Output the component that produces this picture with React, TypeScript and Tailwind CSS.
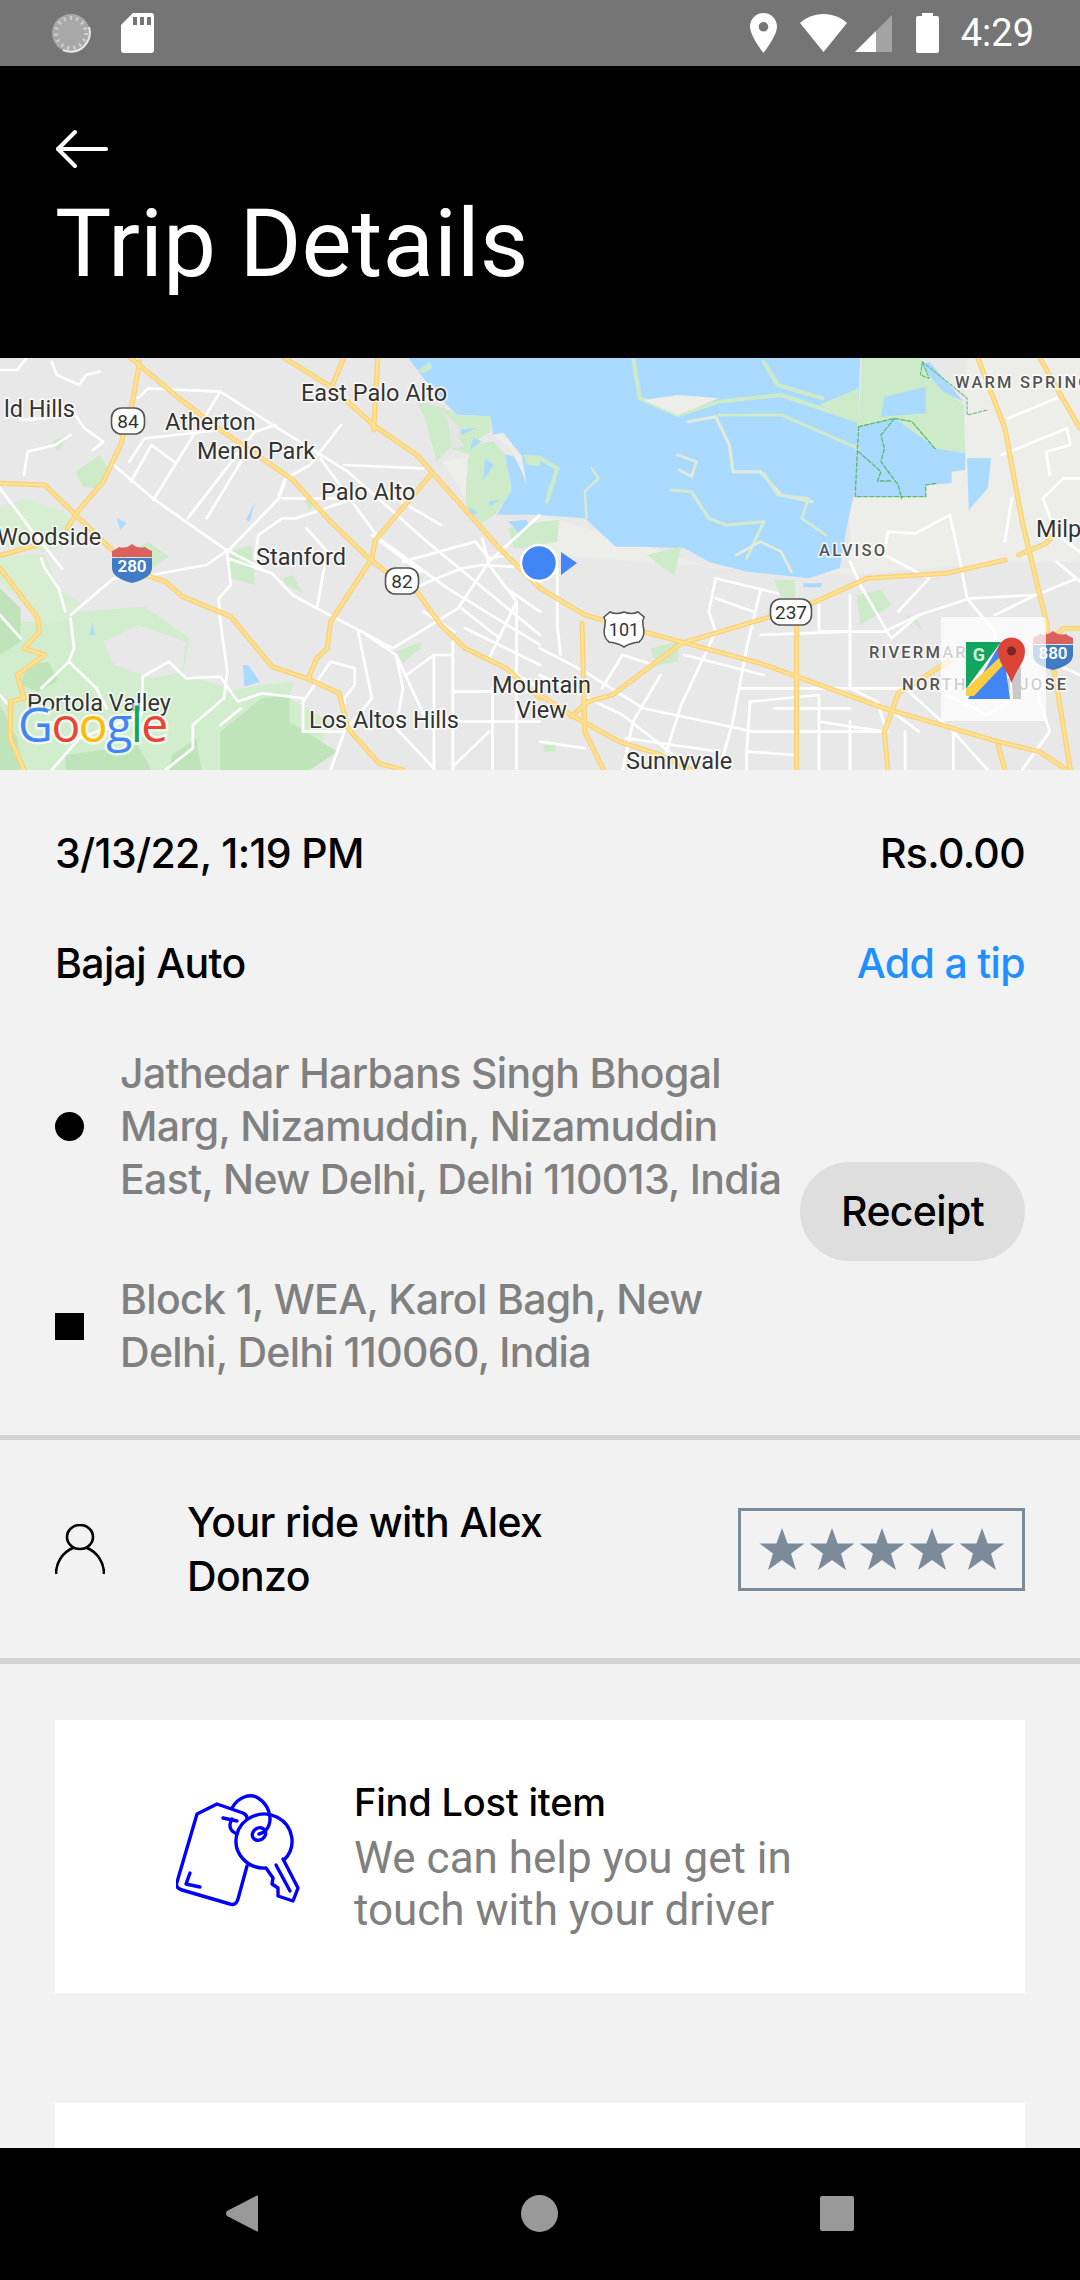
const highwaysLeft = [
  '820,5 960,95 1090,215 1210,300 1330,440 1450,580 1568,700',
  '375,5 520,130 640,225 760,310 850,375 960,500 1060,600 1120,650 1210,710 1280,810 1350,880 1470,940 1568,1030',
  '405,20 385,140 350,270 300,380 225,470 195,520',
  '0,385 130,390 240,500 340,600 420,660 480,680 530,725 670,785 790,935 890,970 985,1015 1010,1120 1100,1225 1170,1245',
  '1250,360 1090,555 1080,610 960,800 950,880 920,910 895,970',
  '1000,5 965,90',
  '1097,5 1085,225',
  '5,600 110,570',
  '0,640 110,790 115,830 70,880 130,900 50,960 70,1030 30,1040 30,1150 70,1245',
];

const roadsLeft = [
  '0,45 50,45 80,5',
  '150,20 165,60 230,90 250,60 290,50',
  '60,195 130,190 205,160 245,220 300,260 270,285',
  '70,360 80,290 160,270 205,240',
  '400,130 430,100 640,110 800,215 1010,350 1240,560 1568,840',
  '330,330 450,435 650,580 760,640',
  '380,380 440,270 505,320',
  '445,435 640,110',
  '545,490 740,230 800,210',
  '600,490 700,320',
  '375,320 420,250 640,225',
  '660,590 810,430 830,370',
  '440,660 600,630 655,590',
  '660,595 670,690 635,730 640,800 660,950 650,1030',
  '660,610 790,655 850,720 920,760 1050,830 1150,900 1240,1100',
  '205,780 330,670 420,660',
  '205,790 215,880 200,920 280,1000 310,1060',
  '0,400 80,510 180,640',
  '120,610 130,640 170,700 190,770',
  '1260,900 1260,1245', '1315,860 1315,1245', '1260,900 1315,900',
  '1315,1010 1568,1010', '1315,1100 1568,1100', '1430,1000 1430,1240', '1500,740 1500,1240',
  '930,310 1100,550 1300,700 1568,870',
  '1000,330 1230,340',
  '1050,830 1140,880 1330,760 1420,620 1568,480',
  '1420,910 1500,740 1420,630 1400,550',
  '1200,700 1340,640 1400,630 1568,640',
  '1080,540 1220,650',
  '1380,560 1170,620',
  '1280,510 1100,400',
  '820,430 1030,430 860,490 820,490 750,540 740,610',
  '890,520 950,590 920,760',
  '1040,830 1080,1030 1000,1130',
  '1150,900 1170,1000 1150,1120 1260,1240',
  '880,1040 960,920 1030,940 1030,990 1000,1030 1000,1120',
  '415,965 490,920 540,970 640,965 690,1040 760,1015 880,1030',
  '880,1030 880,1130 1000,1130 960,1245',
  '990,210 900,330 830,370 810,420',
  '0,1020 20,1045', '1470,700 1568,770',
  '1320,1230 1420,1130', '1420,910 1568,1000',
  '415,965 410,1080 230,1150 150,1245',
  '650,1030 560,1110 560,1180 480,1245',
  '0,780 60,850', '1180,960 1260,900', '1350,820 1568,930', '1380,560 1420,610 1480,600',
  '700,1060 640,1110', '200,920 120,1000', '1340,760 1450,850', '1230,770 1320,830',
];

const highwaysRight = [
  '0,700 130,780 300,830 640,925 1000,1060 1330,1160 1450,1190 1530,1245',
  '140,1040 210,1020 410,865 670,785 790,745 950,670 1180,655 1350,615',
  '1390,600 1470,565 1490,540',
  '122,805 130,1130 185,1245',
  '745,810 745,1245',
  '1270,5 1350,220 1400,500 1470,800 1540,1245',
  '1450,5 1500,100 1568,220',
  '0,1020 90,1080 230,1160 350,1200 440,1245',
  '1010,1245 1000,1130 1040,1015 1200,910',
  '1490,850 1520,820 1568,820',
  '1330,1170 1350,1245',
  '90,1085 140,1040',
];

const roadsRight = [
  '50,640 50,810 60,900',
  '0,880 130,950 300,1060 620,1130 1010,1130',
  '0,960 240,1080 400,1210',
  '510,670 690,715', '510,670 490,770 510,830', '510,730 620,770', '640,705 600,880 560,1100 520,1245',
  '510,830 410,1050 350,1245', '420,900 650,960', '350,960 270,1100 240,1245',
  '810,750 810,830 1000,830 1100,780 1250,730 1440,720',
  '640,840 900,830', '580,1000 1200,1000', '610,1040 810,1020 810,1100 1000,1130',
  '610,1040 600,1190 740,1200', '900,720 900,1000 980,1040 1000,1110',
  '900,620 930,690 1020,850 1100,780', '1190,480 1090,535 1010,530 1000,600 1130,670 1040,770',
  '1190,480 1220,620 1240,730 1320,830 1320,1000',
  '1060,1000 1200,1130 1300,1245', '1320,780 1440,720 1560,670', '1340,300 1530,220 1540,270 1470,290 1480,360',
  '1360,190 1500,130', '1460,430 1520,370 1568,370', '1460,430 1500,540 1568,590',
  '1370,430 1350,560', '1420,1000 1300,1080 1180,1020',
  '1440,1000 1480,1130 1400,1245', '900,1100 900,1245', '1060,1130 1060,1245', '1200,1130 1200,1245',
  '600,1190 600,1245', '810,1100 810,1245',
  '0,1160 130,1180', '180,1000 240,900 330,930', '250,1150 520,1190', '680,1060 900,1060',
  '1010,1060 1100,1130', '1500,620 1568,680', '1440,900 1568,960',
];

const labels: [string, number, number][] = [
  ['ld Hills', 4, 59],
  ['Atherton', 165, 72],
  ['East Palo Alto', 301, 43],
  ['Menlo Park', 197, 101],
  ['Palo Alto', 321, 142],
  ['Woodside', -3, 187],
  ['Stanford', 256, 207],
  ['Portola Valley', 27, 353],
  ['Los Altos Hills', 309, 370],
  ['Mountain', 492, 335],
  ['View', 516, 360],
  ['Sunnyvale', 626, 411],
  ['Milp', 1036, 179],
];

const smallLabels: [string, number, number][] = [
  ['WARM SPRINGS', 955, 30],
  ['ALVISO', 819, 198],
  ['RIVERMARK', 869, 300],
  ['NORTH SAN JOSE', 902, 332],
];

function Shield({ x, y, w, text }: { x: number; y: number; w: number; text: string }) {
  return (
    <g>
      <rect x={x - w / 2} y={y - 13} width={w} height={26} rx={10} fill="#fff" stroke="#555" strokeWidth={1.6} />
      <text x={x} y={y + 7} textAnchor="middle" fontSize={19} fill="#333">{text}</text>
    </g>
  );
}

function Interstate({ x, y, text }: { x: number; y: number; text: string }) {
  return (
    <g>
      <path d={`M${x - 20} ${y - 14} q5 -2 7 -4 q7 2 13 -3 q6 5 13 3 q2 2 7 4 v6 h-40 z`} fill="#d9625f" />
      <path d={`M${x - 20} ${y - 7} h40 v10 q0 10 -20 15 q-20 -5 -20 -15 z`} fill="#3f7cc4" />
      <text x={x} y={y + 7} textAnchor="middle" fontSize={17} fontWeight={600} fill="#fff">{text}</text>
    </g>
  );
}

// Static map, traced from the picture. Roads are in the crop's own coordinates
function MapView() {
  return (
    <svg viewBox="0 0 1080 412" className="block w-[1080px] h-[412px] font-[Roboto]">
      <rect width={1080} height={412} fill="#e8e8e8" />
      {/* shoreline south of the bay */}
      <g transform="translate(380,0) scale(0.3333)">
        <polygon fill="#aadaff" points="85,0 490,0 490,470 350,470 395,395 375,290 430,300 370,225 340,230 330,175 230,170 190,130 130,60" />
        <polygon fill="#cdeac9" points="110,130 190,150 235,170 330,175 332,220 270,260 340,250 375,290 395,395 345,470 305,495 260,450 255,320 270,290 210,270 170,310 135,180" />
        <polygon fill="#e4e4e2" points="180,150 245,215 235,240 255,265 215,270 205,195" />
        <polygon fill="#ededea" points="340,230 370,225 425,295 440,380 425,340 390,270" />
        <polygon fill="#ededea" points="190,310 265,295 255,420 225,370" />
        <polygon fill="#cdeac9" points="110,40 150,12 158,30 130,45" />
        <polygon fill="#cdeac9" points="430,290 510,295 535,330 440,320" />
        <polygon fill="#aadaff" points="315,300 340,320 310,370" />
        <polygon fill="#aadaff" points="325,430 360,425 330,445" />
        <polygon fill="#aadaff" points="265,445 295,465 275,470" />
        <polygon fill="#aadaff" points="240,215 290,210 245,230" />
        <polygon fill="#aadaff" points="280,240 305,250 270,275" />
        <polygon fill="#cdeac9" points="385,510 510,488 540,500 530,550 450,570 400,570" />
        <polygon fill="#aadaff" points="385,490 440,485 445,500 415,525" />
      </g>
      <g transform="translate(0,-3) scale(0.3444,0.3333)" fill="none" strokeLinejoin="round" strokeLinecap="round">
        {/* left half */}
        <polygon fill="#d7eed3" points="0,460 70,430 190,470 230,560 130,590 0,570" />
        <polygon fill="#cdeac9" points="220,350 290,300 320,350 280,400 240,395" />
        <polygon fill="#cdeac9" points="150,260 200,240 170,290" />
        <polygon fill="#cdeac9" points="380,590 430,560 490,605 440,640" />
        <polygon fill="#cdeac9" points="665,590 730,570 740,690 670,670" />
        <polygon fill="#cdeac9" points="820,670 850,660 880,715 830,690" />
        <polygon fill="#cdeac9" points="880,430 910,440 900,470" />
        <polygon fill="#d7eed3" points="0,600 130,600 170,700 240,750 200,800 120,800 0,680" />
        <polygon fill="#d2ecce" points="215,770 420,755 550,850 530,960 640,990 660,1010 760,990 850,980 840,1030 960,1100 900,1245 0,1245 0,800 180,800" />
        <polygon fill="#e8e8e8" points="300,860 400,810 540,860 530,950 440,970 330,930" />
        <polygon fill="#bfe4ba" points="0,700 60,760 60,860 0,900" />
        <polygon fill="#bfe4ba" points="80,930 140,920 170,975 110,1010 60,990" />
        <polygon fill="#bfe4ba" points="640,1130 760,1030 840,1020 840,1100 980,1190 900,1245 640,1245" />
        <polygon fill="#bfe4ba" points="190,1200 400,1170 440,1245 190,1245" />
        <polygon fill="#bfe4ba" points="500,1200 570,1150 585,1245 490,1245" />
        <polygon fill="#bfe4ba" points="0,1050 50,1150 60,1245 0,1245" />
        <polygon fill="#cdeac9" points="1150,890 1225,860 1220,880 1170,925" />
        <polygon fill="#aadaff" points="340,490 368,505 348,525" />
        <polygon fill="#aadaff" points="740,440 725,500 715,495" />
        <polygon fill="#aadaff" points="705,930 720,930 755,980 710,995" />
        <polygon fill="#aadaff" points="268,800 275,840 260,840" />
        <polygon fill="#aadaff" points="250,775 280,750 255,770" />
        {roadsLeft.map((p) => <polyline key={p} points={p} stroke="#fff" strokeWidth={8} />)}
        {highwaysLeft.map((p) => <polyline key={p} points={p} stroke="#fbd27a" strokeWidth={15} />)}
        {highwaysLeft.map((p) => <polyline key={p} points={p} stroke="#fde293" strokeWidth={7} />)}
      </g>
      <g transform="translate(540,-3) scale(0.3444,0.3333)" fill="none" strokeLinejoin="round" strokeLinecap="round">
        {/* right half */}
        <polygon fill="#ededea" points="0,480 300,570 500,640 900,640 900,440 1230,300 1240,5 1568,5 1568,620 1360,620 900,660 0,600" />
        <polygon fill="#aadaff" points="0,5 930,5 915,400 890,520 870,640 780,670 600,650 490,620 420,580 300,575 220,575 130,490 0,480" />
        <polygon fill="#cdeac9" points="935,5 1100,5 1170,100 1230,150 1235,295 1150,280 1030,190 925,215" />
        <polygon fill="#aadaff" points="1000,125 1120,95 1120,175 990,185" />
        <polygon fill="#aadaff" points="1105,30 1130,20 1230,140 1170,110" />
        <polygon fill="#aadaff" points="925,215 1030,190 1150,280 1235,295 1235,345 1195,350 1195,385 1120,390 1120,425 915,425" />
        <polygon fill="#aadaff" points="1240,310 1310,310 1300,400 1245,465" />
        <polyline points="270,5 290,130 400,180 520,140 700,120 930,200" stroke="#cdeac9" strokeWidth={12} />
        <polygon fill="#ededea" points="300,135 400,120 520,130 400,180" />
        <polygon fill="#cdeac9" points="810,150 925,100 925,200" />
        <polyline points="650,20 690,90 820,130" stroke="#cdeac9" strokeWidth={12} />
        <polyline points="430,200 510,185 550,270 560,350 640,350 700,420 790,440" stroke="#e3ead9" strokeWidth={9} />
        <polyline points="520,180 700,180 925,280" stroke="#cdeac9" strokeWidth={9} />
        <polyline points="380,405 440,410 490,490 540,510 650,500 600,610" stroke="#d5ead0" strokeWidth={9} />
        <polyline points="0,310 50,340 20,440" stroke="#cdeac9" strokeWidth={12} />
        <polyline points="150,340 170,370 130,410 135,490" stroke="#d5ead0" strokeWidth={7} />
        <polyline points="400,300 455,320 440,365 405,345" stroke="#e3ead9" strokeWidth={8} />
        <polyline points="650,355 690,420 780,430 760,490 830,540" stroke="#d5ead0" strokeWidth={8} />
        <polyline points="570,600 640,560 700,590 730,650" stroke="#e3ead9" strokeWidth={8} />
        <polygon fill="#cdeac9" points="0,500 55,495 50,560 0,570" />
        <polygon fill="#cdeac9" points="310,600 410,575 390,660 360,640" />
        <polygon fill="#cdeac9" points="680,675 740,675 740,730 700,725" />
        <polygon fill="#cdeac9" points="920,720 990,705 1020,750 930,810" />
        <polygon fill="#cdeac9" points="320,880 400,860 400,920 340,930" />
        <polygon fill="#cdeac9" points="1060,780 1090,790 1115,830" />
        <polygon fill="#cdeac9" points="10,1170 45,1170 45,1190 10,1190" />
        <polygon fill="#aadaff" points="765,685 820,685 815,697 765,697" />
        <polyline points="925,215 1030,190 1080,200 1150,285" stroke="#5dbb72" strokeWidth={4} strokeDasharray="12 6" />
        <polyline points="925,215 915,425 1120,425 1120,390 1150,385" stroke="#5dbb72" strokeWidth={4} strokeDasharray="12 6" />
        <polyline points="1030,190 990,240 1000,280 990,320 1040,390 1050,430" stroke="#5dbb72" strokeWidth={4} strokeDasharray="12 6" />
        <polyline points="925,290 990,350 980,378 1020,378" stroke="#5dbb72" strokeWidth={4} strokeDasharray="12 6" />
        <polyline points="1110,20 1105,60 1130,70 1110,20 1170,70 1240,130 1240,180 1300,165" stroke="#5dbb72" strokeWidth={3} strokeDasharray="10 5" />
        {roadsRight.map((p) => <polyline key={p} points={p} stroke="#fff" strokeWidth={8} />)}
        {highwaysRight.map((p) => <polyline key={p} points={p} stroke="#fbd27a" strokeWidth={15} />)}
        {highwaysRight.map((p) => <polyline key={p} points={p} stroke="#fde293" strokeWidth={7} />)}
      </g>

      {labels.map(([t, x, y]) => (
        <text key={t} x={x} y={y} fontSize={23.5} fill="#333" stroke="#fff" strokeWidth={3} strokeOpacity={0.8} className="[paint-order:stroke]">{t}</text>
      ))}
      {smallLabels.map(([t, x, y]) => (
        <text key={t} x={x} y={y} fontSize={16.5} fontWeight={500} letterSpacing={2.2} fill="#555" stroke="#fff" strokeWidth={3} strokeOpacity={0.8} className="[paint-order:stroke]">{t}</text>
      ))}

      <Shield x={128} y={63} w={33} text="84" />
      <Shield x={402} y={223} w={33} text="82" />
      <Shield x={791} y={254} w={41} text="237" />
      <path d="M604 259 l6 -5 q6 3 14 0 q8 3 14 0 l6 5 q-2 4 -1 8 q3 12 -4 17 q-9 1 -15 5 q-6 -4 -15 -5 q-7 -5 -4 -17 q1 -4 -1 -8 z" fill="#fff" stroke="#555" strokeWidth={1.6} />
      <text x={624} y={278} textAnchor="middle" fontSize={18} fill="#333">101</text>
      <Interstate x={132} y={207} text="280" />
      <Interstate x={1053} y={294} text="880" />

      {/* current location */}
      <circle cx={539} cy={205} r={18} fill="#4285f4" stroke="#fff" strokeWidth={2.5} />
      <polygon points="561,194 577,205 561,217" fill="#4285f4" />

      {/* maps shortcut */}
      <rect x={941} y={259} width={105} height={104} rx={3} fill="#fff" fillOpacity={0.72} />
      <g>
        <polygon points="966,284 1001,284 966,331" fill="#12a55e" />
        <polygon points="1001,284 1004,298 1010,341 968,341" fill="#4285f4" />
        <polygon points="1001,298 1006,304 974,338 966,338 966,331" fill="#fbcf45" />
        <polygon points="1003,284 1021,310 1021,341 1013,341 1012,325" fill="#c9c9c9" />
        <path d="M1011.5 325 C1007 311 998 305 998 293 a13.5 13.5 0 0 1 27 0 C1025 305 1016 311 1011.5 325 z" fill="#db4437" />
        <circle cx={1011.5} cy={293} r={4.5} fill="#7d2620" />
        <text x={979} y={303} textAnchor="middle" fontSize={18} fontWeight={700} fill="#d6f2e2">G</text>
      </g>

      <g fontSize={48} fontWeight={500} stroke="#fff" strokeOpacity={0.65} strokeWidth={5} className="font-['Open_Sans'] [paint-order:stroke]">
        <text x={18} y={384} letterSpacing={-1.5}>
          <tspan fill="#4285f4">G</tspan>
          <tspan fill="#ea4335">o</tspan>
          <tspan fill="#fbbc05">o</tspan>
          <tspan fill="#4285f4">g</tspan>
          <tspan fill="#12a55e">l</tspan>
          <tspan fill="#ea4335">e</tspan>
        </text>
      </g>
    </svg>
  );
}

function StatusBar() {
  return (
    <div className="h-[66px] shrink-0 bg-[#757575] flex items-center pl-[51px] pr-[46px]">
      <svg width="40" height="40" viewBox="0 0 40 40">
        <circle cx="20" cy="20" r="19" fill="#a8a8a8" />
        <path d="M38 14 A19 19 0 0 1 12 37" fill="none" stroke="#e8e8e8" strokeWidth="2" />
        <circle cx="20" cy="20" r="15" fill="none" stroke="#cfcfcf" strokeWidth="4" strokeDasharray="2 4.3" />
      </svg>
      <svg width="33" height="40" viewBox="0 0 33 40" className="ml-[30px]">
        <path d="M12 0 H30 a3 3 0 0 1 3 3 V37 a3 3 0 0 1 -3 3 H3 a3 3 0 0 1 -3 -3 V12 z" fill="#fff" />
        <rect x="12" y="4" width="4" height="8" fill="#757575" />
        <rect x="19" y="4" width="4" height="8" fill="#757575" />
        <rect x="26" y="4" width="4" height="8" fill="#757575" />
      </svg>

      <svg width="27" height="40" viewBox="0 0 27 40" className="ml-auto">
        <path fillRule="evenodd" d="M13.5 0 C6 0 0 6 0 13.5 C0 23 13.5 40 13.5 40 S27 23 27 13.5 C27 6 21 0 13.5 0 z M13.5 9 a4.8 4.8 0 1 1 0 9.6 a4.8 4.8 0 0 1 0 -9.6 z" fill="#fff" />
      </svg>
      <svg width="47" height="38" viewBox="0 0 47 38" className="ml-[23px]">
        <path d="M23.5 38 L0 9 C6 3.5 14 0 23.5 0 S41 3.5 47 9 z" fill="#fff" />
      </svg>
      <svg width="37" height="37" viewBox="0 0 37 37" className="ml-[8px]">
        <path d="M0 37 L37 0 V37 z" fill="#a3a3a3" />
        <path d="M0 37 L21 16 V37 z" fill="#fff" />
      </svg>
      <svg width="23" height="40" viewBox="0 0 23 40" className="ml-[24px]">
        <path d="M6 0 H17 V3 H21 a2 2 0 0 1 2 2 V38 a2 2 0 0 1 -2 2 H2 a2 2 0 0 1 -2 -2 V5 a2 2 0 0 1 2 -2 H6 z" fill="#fff" />
      </svg>
      <span className="ml-[22px] text-[38px] leading-none text-white font-[Roboto]">4:29</span>
    </div>
  );
}

function BlackHeader() {
  return (
    <div className="h-[292px] shrink-0 bg-black pl-[55px] pt-[63px] text-white">
      <svg width="54" height="40" viewBox="0 0 54 40" className="block" fill="none" stroke="#fff" strokeWidth="4" strokeLinecap="round" strokeLinejoin="round">
        <path d="M3 20 H51" />
        <path d="M20 3 L3 20 L20 37" />
      </svg>
      <h1 className="mt-[20px] text-[94.5px] leading-[110px] font-normal font-[Roboto]">Trip Details</h1>
    </div>
  );
}

function Person() {
  return (
    <svg width="50" height="50" viewBox="0 0 50 50" fill="none" stroke="#000" strokeWidth="2.6" className="shrink-0">
      <ellipse cx="25" cy="13" rx="13" ry="12" />
      <path d="M1 50 C1 38 8 28 18 24 M49 50 C49 38 42 28 32 24" strokeLinecap="round" />
    </svg>
  );
}

function Star() {
  return (
    <svg width="46" height="42" viewBox="0 0 46 42">
      <polygon points="23,0 28.6,15.5 45.5,15.5 32,25.5 37,42 23,32 9,42 14,25.5 0.5,15.5 17.4,15.5" fill="#7b8b9a" />
    </svg>
  );
}

function KeyTag() {
  return (
    <svg width="124" height="116" viewBox="26 22 124 116" fill="none" stroke="#0000ff" strokeWidth="3.4" strokeLinecap="round" strokeLinejoin="round" className="block shrink-0 mb-[11px]">
      {/* tag */}
      <path d="M97 47 Q97 44 93 42 L67 33 L47 43 L27 111 Q25 117 32 119 L80 133 Q86 135 88 128 L97 95" />
      <path d="M73 47 L87 50" />
      <path d="M82 48 C78 55 80 60 87 63" />
      <path d="M40 102 L36 113 L50 116" />
      {/* ring */}
      <path d="M82 37 C88 26 100 22 108 27 C118 33 122 45 119 54 C117 60 113 62 109 63" />
      <ellipse cx="109" cy="63" rx="7" ry="6" transform="rotate(-35 109 63)" />
      {/* key */}
      <path d="M134 89 A28 27 0 1 0 116 97 L123 107 L122 113 L128 117 L128 125 L143 130 L148 117 L133 88" />
      <path d="M126 94 L140 120" />
    </svg>
  );
}

function AddressRow({ shape, lines }: { shape: 'dot' | 'square'; lines: string[] }) {
  return (
    <div className="flex items-center">
      {shape === 'dot'
        ? <div className="w-[29px] h-[29px] rounded-full bg-black shrink-0" />
        : <div className="w-[29px] h-[27px] bg-black shrink-0" />}
      <div className="ml-[36px] text-[#808080] text-[41px] leading-[53px] tracking-[-0.65px]">
        {lines.map((l) => <div key={l} className="whitespace-nowrap">{l}</div>)}
      </div>
    </div>
  );
}

function TripBody() {
  return (
    <div className="flex-1 min-h-0 overflow-hidden bg-[#f2f2f2] font-[Inter] font-medium text-black">
      {/* date, fare and vehicle */}
      <div className="px-[55px] pt-[59px] flex justify-between text-[41px] leading-[48px] tracking-[-0.65px]">
        <span>3/13/22, 1:19 PM</span>
        <span>Rs.0.00</span>
      </div>
      <div className="px-[55px] mt-[62px] flex justify-between text-[41px] leading-[48px] tracking-[-0.65px]">
        <span>Bajaj Auto</span>
        <span className="text-[#1e90ff]">Add a tip</span>
      </div>

      {/* route */}
      <div className="relative px-[55px] mt-[60px] flex flex-col gap-[67px]">
        <AddressRow shape="dot" lines={['Jathedar Harbans Singh Bhogal', 'Marg, Nizamuddin, Nizamuddin', 'East, New Delhi, Delhi 110013, India']} />
        <AddressRow shape="square" lines={['Block 1, WEA, Karol Bagh, New', 'Delhi, Delhi 110060, India']} />
        <button className="absolute right-[55px] top-[115px] w-[225px] h-[99px] rounded-[50px] bg-[#dedede] text-black text-[41px] tracking-[-0.65px]">Receipt</button>
      </div>

      <div className="mt-[56px] h-[5px] bg-[#d3d3d3]" />

      {/* driver */}
      <div className="h-[218px] px-[55px] flex items-center">
        <Person />
        <div className="ml-[82px] w-[400px] text-[41px] leading-[54px] tracking-[-0.65px]">Your ride with Alex Donzo</div>
        <div className="ml-auto w-[287px] h-[83px] border-[3px] border-[#7b8b9a] flex items-center justify-center gap-[4px]">
          <Star /><Star /><Star /><Star /><Star />
        </div>
      </div>

      <div className="h-[6px] bg-[#d3d3d3]" />

      {/* lost item card */}
      <div className="mx-[55px] mt-[56px] h-[273px] bg-white flex items-center pl-[121px]">
        <KeyTag />
        <div className="ml-[54px] mb-[6px]">
          <div className="text-[38px] leading-[60px] tracking-[-0.2px]">Find Lost item</div>
          <div className="text-[44px] leading-[52px] text-[#808080] font-normal font-[Roboto] w-[480px]">We can help you get in touch with your driver</div>
        </div>
      </div>

      <div className="mx-[55px] mt-[110px] h-[200px] bg-white" />
    </div>
  );
}

function NavBar() {
  return (
    <div className="h-[132px] shrink-0 bg-black flex items-center pb-[2px] pl-[226px]">
      <svg width="32" height="37" viewBox="0 0 32 37">
        <path d="M31 0.5 Q32 0 32 2 V35 Q32 37 31 36.5 L1 21 Q-1 18.5 1 16 z" fill="#999" />
      </svg>
      <div className="ml-[263px] w-[37px] h-[37px] rounded-full bg-[#999]" />
      <div className="ml-[262px] w-[34px] h-[35px] rounded-[2px] bg-[#999]" />
    </div>
  );
}

export default function App() {
  return (
    <div className="w-[1080px] h-[2280px] overflow-hidden flex flex-col">
      <StatusBar />
      <BlackHeader />
      <div className="h-[412px] shrink-0 overflow-hidden">
        <MapView />
      </div>
      <TripBody />
      <NavBar />
    </div>
  );
}
